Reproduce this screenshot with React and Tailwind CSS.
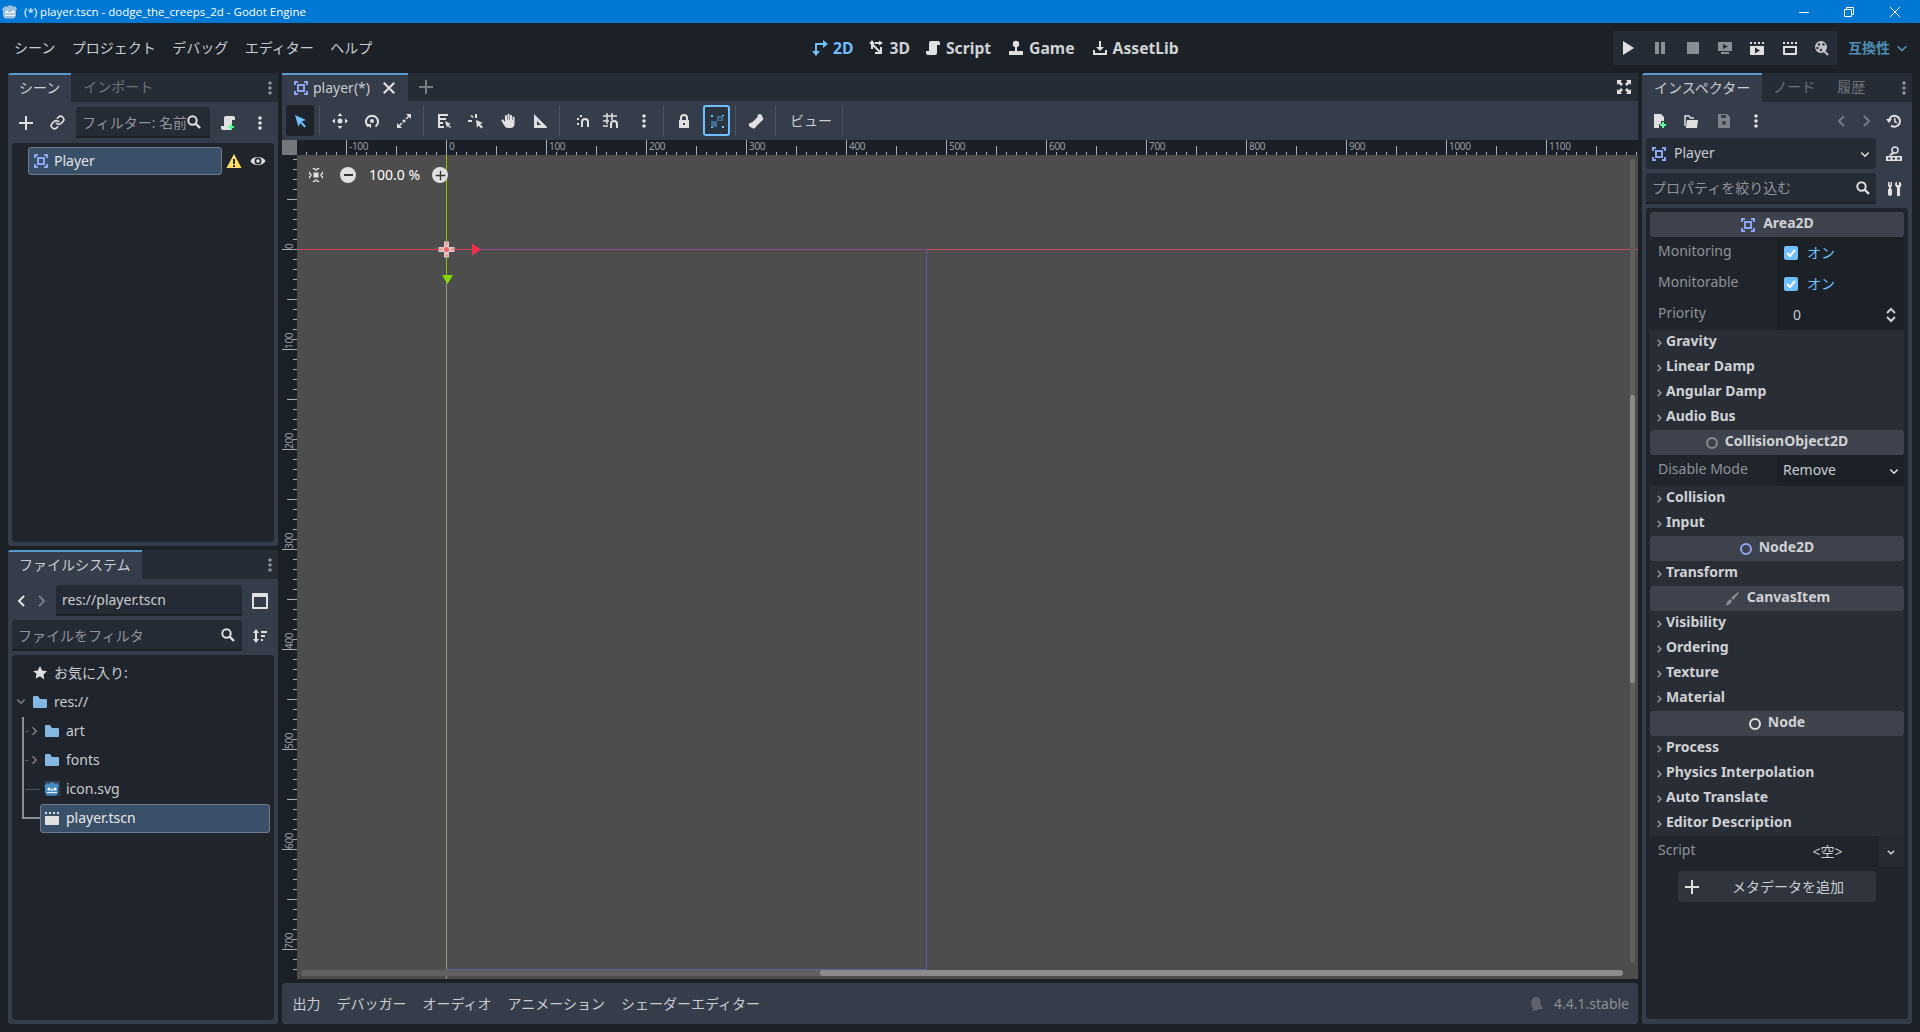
import React from "react";
import { Link as LinkIcon } from "lucide-react";

// 16x16 icon wrapper, same grid the editor icons use
const Ic = ({ s = 16, className = "", children }) => (
  <svg width={s} height={s} viewBox="0 0 16 16" className={`shrink-0 ${className}`} fill="#e0e0e0">
    {children}
  </svg>
);

const Area2D = ({ s = 16 }) => (
  <Ic s={s}>
    <path fill="#8da5f3" d="M1 1h4v2H3v2H1zM11 1h4v4h-2V3h-2zM1 11h2v2h2v2H1zM13 11h2v4h-4v-2h2z" />
    <path fill="#8da5f3" fillRule="evenodd" d="M4 4h8v8H4zM6 6v4h4V6z" />
  </Ic>
);
const Plus = ({ s = 16, fill = "#e0e0e0" }) => (
  <Ic s={s}><path fill={fill} d="M7 1h2v6h6v2H9v6H7V9H1V7h6z" /></Ic>
);
const Search = () => (
  <Ic>
    <circle cx="6.5" cy="6.5" r="4.2" fill="none" stroke="#e0e0e0" strokeWidth="2" />
    <path d="M9.5 9.5l4.5 4.5" stroke="#e0e0e0" strokeWidth="2.4" />
  </Ic>
);
const Kebab = ({ fill = "#e0e0e0" }) => (
  <Ic>
    <circle cx="8" cy="3" r="1.8" fill={fill} />
    <circle cx="8" cy="8" r="1.8" fill={fill} />
    <circle cx="8" cy="13" r="1.8" fill={fill} />
  </Ic>
);
const ScriptShape = () => (
  <path d="M6 1h7a2 2 0 0 1 2 2v2h-3v8a2 2 0 0 1-2 2H3a2 2 0 0 1-2-2v-2h3V3a2 2 0 0 1 2-2z" />
);
const Chevron = ({ dir = "right", s = 16, fill = "#e0e0e0", w = 2 }) => {
  const d = {
    right: "M6 3l5 5-5 5",
    left: "M10 3L5 8l5 5",
    down: "M3 6l5 5 5-5",
  }[dir];
  return (
    <Ic s={s}><path d={d} fill="none" stroke={fill} strokeWidth={w} /></Ic>
  );
};
const Folder = () => (
  <Ic><path fill="#84b7e2" d="M1 3a1 1 0 0 1 1-1h4l2 3h6a1 1 0 0 1 1 1v7a1 1 0 0 1-1 1H2a1 1 0 0 1-1-1z" /></Ic>
);
const GodotHead = ({ fill = "#478cbf" }) => (
  <Ic>
    <path fill={fill} d="M3 2l2 1 1-1.500h4l1 1.500 2-1 2 3-1 1.500v5.500l-2 2.500H3l-2-2.500V6.500L0 5z" />
    <circle cx="5" cy="8" r="1.600" fill="#fff" />
    <circle cx="11" cy="8" r="1.600" fill="#fff" />
    <path fill="#fff" d="M7.200 8h1.600v2H7.200zM3 11h10v1H3z" opacity=".85" />
  </Ic>
);
const Clapper = ({ children }) => (
  <Ic>
    <path d="M1 6h14v8a1 1 0 0 1-1 1H2a1 1 0 0 1-1-1z" />
    <path d="M1 2l2 0v2H1zM5 2h2v2H5zM9 2h2v2H9zM13 2h2v2h-2z" />
    {children}
  </Ic>
);

const Sep = ({ className = "" }) => <div className={`w-px h-[31px] bg-[#4b525f] shrink-0 ${className}`} />;
const ToolBtn = ({ className = "w-[32px]", children }) => (
  <div className={`h-[31px] flex items-center justify-center shrink-0 ${className}`}>{children}</div>
);

const rulerTicks = [];
for (let i = -14; i <= 120; i++) rulerTicks.push(i * 10);

// horizontal ruler, origin sits 149px from its left edge
const TopRuler = () => (
  <svg width="1341" height="15" className="block">
    {rulerTicks.map((v) => {
      const x = v + 149.5;
      const h = v % 100 === 0 ? 15 : v % 50 === 0 ? 9 : 3;
      return <line key={v} x1={x} x2={x} y1={15 - h} y2="15" stroke="#a9acb0" strokeWidth="1" />;
    })}
    {rulerTicks.filter((v) => v % 100 === 0 && v <= 1100).map((v) => (
      <text key={v} x={v + 152} y="10" fontSize="10" fill="#9a9da2" letterSpacing="-0.3">{v}</text>
    ))}
  </svg>
);

const vTicks = [];
for (let i = -9; i <= 73; i++) vTicks.push(i * 10);

const LeftRuler = () => (
  <svg width="15" height="824" className="block">
    {vTicks.map((v) => {
      const y = v + 94.5;
      const w = v % 100 === 0 ? 15 : v % 50 === 0 ? 10 : 4;
      return <line key={v} x1={15 - w} x2="15" y1={y} y2={y} stroke="#a9acb0" strokeWidth="1" />;
    })}
    {vTicks.filter((v) => v % 100 === 0).map((v) => (
      <text key={v} x="11" y={v + 94} fontSize="10" fill="#9a9da2" letterSpacing="-0.3" transform={`rotate(-90 11 ${v + 94})`}>{v}</text>
    ))}
  </svg>
);

const DockTab = ({ children, active, className = "px-[11px]" }) =>
  active ? (
    <div className={`h-[29px] pb-[2px] flex items-center bg-[#363d4a] border-t-2 border-[#5a9bcf] text-[#c9ccd0] shrink-0 ${className}`}>
      {children}
    </div>
  ) : (
    <div className="h-[29px] pb-[1px] flex items-center text-[#6e7279] shrink-0">{children}</div>
  );

const InputBox = ({ className = "", children }) => (
  <div className={`bg-[#252b34] border-b-2 border-[#1c2128] rounded-t-[3px] flex items-center overflow-hidden ${className}`}>
    {children}
  </div>
);

const SectionHeader = ({ icon, children }) => (
  <div className="h-[25px] bg-[#3d424c] rounded-[3px] flex items-center justify-center gap-[7px] font-bold text-[#cfd1d4]">
    {icon}
    <span className="-mt-[3px]">{children}</span>
  </div>
);
const Section = ({ children }) => (
  <div className="h-[25px] bg-[#282d36] flex items-center pl-[4px] font-bold text-[#cfd1d4]">
    <Chevron s={10} fill="#8d9096" w={2.5} />
    <span className="ml-[2px] -mt-[3px]">{children}</span>
  </div>
);
const PropRow = ({ label, children }) => (
  <div className="h-[31px] flex">
    <div className="flex-1 pl-[4px] pt-[4px] text-[#8f9297]">
      <span className="ml-[4px]">{label}</span>
    </div>
    <div className="w-[127px] bg-[#1c2128] flex items-center">{children}</div>
  </div>
);
const CheckVal = () => (
  <>
    <div className="ml-[7px] w-[14px] h-[14px] rounded-[2px] bg-[#70bfff] flex items-center justify-center">
      <svg width="10" height="10" viewBox="0 0 10 10"><path d="M1 5l3 3 5-6" fill="none" stroke="#fff" strokeWidth="2" /></svg>
    </div>
    <span className="ml-[9px] text-[#70bfff]">オン</span>
  </>
);
const Ring = ({ className }) => (
  <div className={`w-[12px] h-[12px] rounded-full border-2 ${className}`} />
);

const MainTab = ({ icon, label, className = "", color = "text-[#d0d2d5]" }) => (
  <div className={`flex items-center gap-[5px] font-bold text-[15.7px] ${color} ${className}`}>
    {icon}
    <span>{label}</span>
  </div>
);

const TreeRow = ({ className, icon, label }) => (
  <div className={`h-[29px] flex items-center relative ${className}`}>
    <span className="w-[16px] flex justify-center">{icon}</span>
    <span className="ml-[6px]">{label}</span>
  </div>
);

export default function App() {
  return (
    <div className="w-[1920px] h-[1032px] overflow-hidden flex flex-col bg-[#1c2128] text-[14px] leading-[20px] text-[#c9ccd0] font-['Noto_Sans','Noto_Sans_CJK_JP',sans-serif]">
      {/* window title */}
      <div className="h-[23px] bg-[#0078d4] flex items-center text-white text-[11.5px] shrink-0">
        <div className="w-[24px] pl-[2px]"><GodotHead fill="#9cc0e0" /></div>
        <span className="font-['Open_Sans',sans-serif]">(*) player.tscn - dodge_the_creeps_2d - Godot Engine</span>
        <div className="ml-auto flex items-center">
          <svg width="12" height="12" viewBox="0 0 12 12" className="mr-[33px]"><path d="M1 6.500h10" stroke="#fff" /></svg>
          <svg width="12" height="12" viewBox="0 0 12 12" className="mr-[34px]"><path d="M1.500 3.500h7v7h-7zM3.500 3.500v-2h7v7h-2" fill="none" stroke="#fff" /></svg>
          <svg width="12" height="12" viewBox="0 0 12 12" className="mr-[19px]"><path d="M1 1l10 10M11 1L1 11" stroke="#fff" /></svg>
        </div>
      </div>

      {/* main menu row */}
      <div className="h-[50px] shrink-0 flex items-center">
        <div className="w-[812px] pl-[14px] flex gap-[16.5px]">
          <span>シーン</span><span>プロジェクト</span><span>デバッグ</span><span>エディター</span><span>ヘルプ</span>
        </div>
        <div className="flex">
          <MainTab color="text-[#70bfff]" label="2D" icon={
            <Ic><path fill="none" stroke="#70bfff" strokeWidth="2" d="M4 13V4h8" /><path fill="#70bfff" d="M11 0l5 4-5 4zM0 11h8l-4 5z" /></Ic>
          } />
          <MainTab className="ml-[15px]" label="3D" icon={
            <Ic>
              <path d="M4 0L1 4h6zM15 3l-4-2.500v5z" />
              <path fill="none" stroke="#e0e0e0" strokeWidth="2" d="M4 4v5M4 4l9 9M13 14V7M14 13H7M7 3h4" />
            </Ic>
          } />
          <MainTab className="ml-[15px]" label="Script" icon={<Ic><ScriptShape /></Ic>} />
          <MainTab className="ml-[17px]" label="Game" icon={
            <Ic><circle cx="8" cy="4" r="3.200" /><path d="M7 6h2v5H7zM1 11h14v4H1z" /></Ic>
          } />
          <MainTab className="ml-[17px]" label="AssetLib" icon={
            <Ic><path d="M7 1h2v6h3l-4 4-4-4h3zM1 10h2v3h10v-3h2v5H1z" /></Ic>
          } />
        </div>
        <div className="ml-auto flex items-center pr-[11px]">
          <div className="w-[224px] h-[34px] bg-[#262c35] rounded-[3px] flex items-center justify-between px-[7px]">
            <Ic><path d="M3 1l11 7-11 7z" /></Ic>
            <Ic><path fill="#8a8e95" d="M3 2h4v12H3zM9 2h4v12H9z" /></Ic>
            <Ic><path fill="#8a8e95" d="M2 2h12v12H2z" /></Ic>
            <Ic><path fill="#8a8e95" fillRule="evenodd" d="M1 2h14v9H1zM6 4v5l5-2.500zM4 12h8v2H4z" /></Ic>
            <Clapper><path fill="#262c35" d="M6 7.500v6l5-3z" /></Clapper>
            <Clapper><path fill="#262c35" d="M3 8h10v5H3z" /></Clapper>
            <Ic>
              <circle cx="7" cy="7" r="6" fill="#c0c2c6" />
              <circle cx="5" cy="4.500" r="1.200" fill="#262c35" /><circle cx="9.500" cy="4.500" r="1.200" fill="#262c35" />
              <circle cx="3.500" cy="8" r="1.200" fill="#262c35" /><circle cx="7" cy="10" r="1.200" fill="#262c35" />
              <path d="M10 11l4 4" stroke="#c0c2c6" strokeWidth="2" />
            </Ic>
          </div>
          <span className="ml-[11px] text-[#4f8fb3] font-bold">互換性</span>
          <span className="ml-[5px]"><Chevron dir="down" fill="#4f8fb3" s={14} /></span>
        </div>
      </div>

      {/* docks */}
      <div className="flex gap-1 px-2 h-[951px] shrink-0">
        {/* left docks */}
        <div className="w-[270px] flex flex-col gap-1 shrink-0">
          <div className="h-[473px] flex flex-col bg-[#363d4a] rounded-[3px] overflow-hidden">
            <div className="h-[29px] bg-[#262c35] flex items-center shrink-0">
              <DockTab active>シーン</DockTab>
              <div className="ml-[12px]"><DockTab>インポート</DockTab></div>
              <div className="ml-auto"><Kebab fill="#8a8e95" /></div>
            </div>
            <div className="h-[41px] flex items-center shrink-0">
              <div className="w-[68px] flex items-center pl-[10px] gap-[16px]">
                <Plus />
                <LinkIcon size={15} color="#e0e0e0" strokeWidth={2.6} />
              </div>
              <InputBox className="w-[134px] h-[31px] pl-[6px] pr-[8px]">
                <span className="flex-1 whitespace-nowrap overflow-hidden text-[#8f939a] pt-[3px]">フィルター: 名前</span>
                <span className="-ml-[1px]"><Search /></span>
              </InputBox>
              <div className="ml-[10px]">
                <Ic>
                  <ScriptShape />
                  <path fill="#5fff97" d="M10 9h2v2h2v2h-2v2h-2v-2H8v-2h2z" />
                </Ic>
              </div>
              <div className="ml-[16px]"><Kebab /></div>
            </div>
            <div className="flex-1 mx-1 mb-1 bg-[#20252d] rounded-[3px] pt-[4px] pl-[16px]">
              <div className="flex items-center">
                <div className="w-[194px] h-[28px] bg-[#3a5068] border border-[#6f7b8a] rounded-[3px] flex items-center pl-[3px] text-[#e0e2e4]">
                  <span className="ml-[1px]"><Area2D /></span>
                  <span className="ml-[5px]">Player</span>
                </div>
                <div className="ml-[4px]">
                  <Ic>
                    <path fill="#ffdd65" d="M8 1l7.500 14H.5z" />
                    <path fill="#20252d" d="M7 6h2v5H7zM7 12h2v2H7z" />
                  </Ic>
                </div>
                <div className="ml-[8px]">
                  <Ic>
                    <path d="M.5 8C3 2.500 13 2.500 15.500 8 13 13.500 3 13.500 .5 8z" />
                    <circle cx="8" cy="8" r="3.500" fill="#20252d" />
                    <circle cx="8" cy="8" r="1.800" fill="#e0e0e0" />
                  </Ic>
                </div>
              </div>
            </div>
          </div>

          <div className="h-[474px] flex flex-col bg-[#363d4a] rounded-[3px] overflow-hidden">
            <div className="h-[29px] bg-[#262c35] flex items-center shrink-0">
              <DockTab active>ファイルシステム</DockTab>
              <div className="ml-auto"><Kebab fill="#8a8e95" /></div>
            </div>
            <div className="h-[37px] flex items-center shrink-0 pt-[6px]">
              <div className="pl-[6px] w-[48px] flex gap-[3px]">
                <Chevron dir="left" />
                <Chevron fill="#757a82" />
              </div>
              <InputBox className="w-[186px] h-[31px] pl-[6px]">res://player.tscn</InputBox>
              <div className="ml-[10px]">
                <Ic><path fillRule="evenodd" d="M0 1a1 1 0 0 1 1-1h14a1 1 0 0 1 1 1v14a1 1 0 0 1-1 1H1a1 1 0 0 1-1-1zM2 4v10h12V4z" /></Ic>
              </div>
            </div>
            <div className="h-[35px] flex items-center shrink-0 pt-[4px] pl-[4px]">
              <InputBox className="w-[230px] h-[31px] pl-[6px] pr-[6px]">
                <span className="flex-1 text-[#8f939a] pt-[3px]">ファイルをフィルタ</span>
                <Search />
              </InputBox>
              <div className="ml-[10px]">
                <Ic><path d="M4 1l3 4H5v6h2l-3 4-3-4h2V5H1zM9 3h6v2H9zM9 7h4v2H9zM9 11h2v2H9z" /></Ic>
              </div>
            </div>
            <div className="flex-1 mx-1 mb-1 mt-1 bg-[#20252d] rounded-[3px] pt-[3px] relative">
              <TreeRow className="pl-[20px]" icon={<Ic><path d="M8 1l2.200 4.500 4.800.7-3.500 3.400.8 4.900L8 11.200l-4.300 2.300.8-4.900L1 6.200l4.800-.7z" /></Ic>} label="お気に入り:" />
              <div className="absolute left-[3px] top-[40px]"><Chevron dir="down" s={12} fill="#7d8187" /></div>
              <TreeRow className="pl-[20px]" icon={<Folder />} label="res://" />
              <div className="absolute left-[10px] top-[62px] w-[2px] h-[101px] bg-[#8b8d90]" />
              <div className="absolute left-[10px] top-[162px] w-[18px] h-[2px] bg-[#8b8d90]" />
              <div className="absolute left-[13px] top-[134px] w-[15px] h-px bg-[#4c5058]" />
              <div className="absolute left-[13px] top-[76px] w-[4px] h-px bg-[#4c5058]" />
              <div className="absolute left-[13px] top-[105px] w-[4px] h-px bg-[#4c5058]" />
              <div className="absolute left-[16px] top-[70px]"><Chevron s={12} fill="#7d8187" /></div>
              <div className="absolute left-[16px] top-[99px]"><Chevron s={12} fill="#7d8187" /></div>
              <TreeRow className="pl-[32px]" icon={<Folder />} label="art" />
              <TreeRow className="pl-[32px]" icon={<Folder />} label="fonts" />
              <TreeRow className="pl-[32px]" icon={
                <div className="w-[15px] h-[15px] bg-[#363d55] flex items-center justify-center rounded-[1px]">
                  <GodotHead />
                </div>
              } label="icon.svg" />
              <div className="absolute left-[28px] top-[149px] w-[230px] h-[29px] bg-[#3a5068] border border-[#6f7b8a] rounded-[3px]" />
              <div className="relative text-[#e6e8ea]">
                <TreeRow className="pl-[32px]" icon={<Clapper />} label="player.tscn" />
              </div>
            </div>
          </div>
        </div>

        {/* center */}
        <div className="w-[1356px] flex flex-col shrink-0">
          <div className="h-[28px] bg-[#262c35] flex items-center shrink-0 rounded-t-[3px]">
            <div className="w-[126px] h-[28px] bg-[#363d4a] border-t-2 border-[#5a9bcf] flex items-center pl-[11px] shrink-0">
              <Area2D />
              <span className="ml-[4px] text-[#c9ccd0]">player(*)</span>
              <span className="ml-[11px]">
                <Ic><path d="M3.500 2L8 6.500 12.500 2 14 3.500 9.500 8l4.500 4.500-1.500 1.500L8 9.500 3.500 14 2 12.500 6.500 8 2 3.500z" /></Ic>
              </span>
            </div>
            <div className="ml-[10px]"><Plus fill="#777b82" /></div>
            <div className="ml-auto mr-[6px]">
              <Ic><path d="M1 1h5L4.500 2.500 7 5 5 7 2.500 4.500 1 6zM15 1v5l-1.500-1.500L11 7 9 5l2.500-2.500L10 1zM1 15v-5l1.500 1.500L5 9l2 2-2.500 2.500L6 15zM15 15h-5l1.500-1.500L9 11l2-2 2.500 2.500L15 10z" /></Ic>
            </div>
          </div>

          <div className="h-[39px] bg-[#363d4a] flex items-center pl-[4px] shrink-0">
            <div className="w-[28px] h-[31px] bg-[#1f242c] rounded-[3px] flex items-center justify-center">
              <Ic><path fill="#70bfff" d="M3 2l11 5-4.500 1.500L14 13l-1.500 1.500-4.500-4.500L6.500 14z" /></Ic>
            </div>
            <Sep className="ml-[5px] mr-[4px]" />
            <ToolBtn>
              <Ic><circle cx="8" cy="8" r="2.500" /><path d="M8 0l2.500 3h-5zM8 16l-2.500-3h5zM0 8l3-2.500v5zM16 8l-3 2.500v-5z" /></Ic>
            </ToolBtn>
            <ToolBtn>
              <Ic><path fill="none" stroke="#e0e0e0" strokeWidth="2" d="M4.500 13.500a6 6 0 1 1 7 0" /><circle cx="8" cy="8" r="2" /><path d="M2 11h5v4z" /></Ic>
            </ToolBtn>
            <ToolBtn>
              <Ic><path d="M10 1h5v5l-2-2-2.500 2.500-1-1L12 3zM6 15H1v-5l2 2 2.500-2.500 1 1L4 13z" /><circle cx="8" cy="8" r="1.500" /></Ic>
            </ToolBtn>
            <Sep className="ml-[3px] mr-[4px]" />
            <ToolBtn>
              <Ic><path d="M2 1h10v2H4v2h6v2H4v2h3v2H4v2h4v2H2z" /><path d="M9 8l6 3-2.500.8L15 14l-1 1-2.400-2.200L11 15z" /></Ic>
            </ToolBtn>
            <ToolBtn>
              <Ic><path d="M0 7h4v2H0zM7 1h2v4H7zM2.500 3l1.200-1 2 2-1.200 1z" /><path d="M8 7l7 3-3 1 3 3-1.500 1.500-3-3L9 15z" /></Ic>
            </ToolBtn>
            <ToolBtn>
              <Ic><path d="M5 3a1 1 0 0 1 2 0v4h.5V1.800a1 1 0 0 1 2 0V7h.5V2.800a1 1 0 0 1 2 0V7l.5 0V4.500a1 1 0 0 1 2 0V11c0 2.500-2 4-4 4H8c-2 0-3-1-4-3L1.500 8c-.5-1 1-2 2-1L5 9z" /></Ic>
            </ToolBtn>
            <ToolBtn>
              <Ic><path fillRule="evenodd" d="M2 1l13 13v1H2zM5 8v4h4z" /></Ic>
            </ToolBtn>
            <Sep className="ml-[3px] mr-[6px]" />
            <ToolBtn>
              <Ic><path d="M3 5h2v2H3zM3 10h2v2H3zM6 2h2v2H6z" /><path fill="none" stroke="#e0e0e0" strokeWidth="2" d="M8 14V9a3 3 0 0 1 6 0v5" /></Ic>
            </ToolBtn>
            <ToolBtn className="w-[26px]">
              <Ic>
                <path fill="none" stroke="#e0e0e0" strokeWidth="1.500" d="M4 0v11M9 0v7M0 3h14M0 8h6M0 13h5" />
                <path fill="none" stroke="#e0e0e0" strokeWidth="2" d="M8 15v-4a3 3 0 0 1 6 0v4" />
              </Ic>
            </ToolBtn>
            <ToolBtn className="w-[32px] ml-[4px]"><Kebab /></ToolBtn>
            <Sep className="ml-[3px] mr-[4px]" />
            <ToolBtn>
              <Ic><path fill="none" stroke="#e0e0e0" strokeWidth="2" d="M5 8V5a3 3 0 0 1 6 0v3" /><path fillRule="evenodd" d="M3 7h10v8H3zM7 10v2h2v-2z" /></Ic>
            </ToolBtn>
            <div className="w-[27px] h-[31px] ml-[3px] border-2 border-[#70bfff] rounded-[3px] bg-[#2a3340] flex items-center justify-center">
              <Ic>
                <path fill="#426c93" d="M2 8h6v6H2zM8 3h6v5H8z" />
                <path fill="#2a3340" d="M10 5h2v2h-2z" />
                <path fill="#6fd0ff" d="M2 2h2v2H2zM13 13h2v2h-2zM2 14h2v1H2zM13 2h2v1h-2z" />
              </Ic>
            </div>
            <Sep className="ml-[5px] mr-[5px]" />
            <ToolBtn className="w-[30px]">
              <Ic><path d="M10.500 1.500a2.500 2.500 0 0 1 3.800 2.200 2.500 2.500 0 0 1-.7 4.300L8 13.500a2.500 2.500 0 0 1-4.500 1 2.500 2.500 0 0 1-2-4.200 2.500 2.500 0 0 1 2.500-.8L9.500 4a2.500 2.500 0 0 1 1-2.500z" /></Ic>
            </ToolBtn>
            <Sep className="ml-[4px] mr-[14px]" />
            <span className="text-[#c9ccd0]">ビュー</span>
            <Sep className="ml-[10px]" />
          </div>

          <div className="h-[15px] flex bg-[#1b2028] shrink-0">
            <div className="w-[15px] bg-[#74777c] shrink-0" />
            <TopRuler />
          </div>

          <div className="h-[824px] flex shrink-0">
            <div className="w-[15px] bg-[#1b2028] shrink-0"><LeftRuler /></div>
            {/* 2D canvas: axes, origin and overlays sit at their canvas coordinates */}
            <div className="flex-1 bg-[#4d4d4d] relative overflow-hidden">
              <div className="absolute left-[149px] top-0 w-px h-[94px] bg-[#8cc000]" />
              <div className="absolute left-[149px] top-[94px] w-px h-[730px] bg-[#8a9e78]" />
              <div className="absolute left-[149px] top-[94px] w-px h-[34px] bg-[#8cc000]" />
              <div className="absolute left-0 top-[94px] w-[149px] h-px bg-[#d9405a]" />
              <div className="absolute left-[149px] top-[94px] w-[480px] h-px bg-[#93478f]" />
              <div className="absolute left-[149px] top-[94px] w-[30px] h-px bg-[#d9405a]" />
              <div className="absolute left-[629px] top-[94px] w-[713px] h-px bg-[#c94a6a]" />
              <div className="absolute left-[629px] top-[94px] w-px h-[720px] bg-[#5f5fa8]" />
              <div className="absolute left-[149px] top-[814px] w-[480px] h-px bg-[#5f5fa8]" />

              {/* h scrollbar */}
              <div className="absolute left-[4px] top-[815px] w-[1322px] h-[6px] rounded-full bg-[#606060]">
                <div className="absolute left-[519px] top-0 right-0 h-full rounded-full bg-[#8c8c8c]" />
              </div>
              {/* v scrollbar */}
              <div className="absolute left-[1333px] top-[4px] w-[5px] h-[804px] rounded-full bg-[#606060]">
                <div className="absolute left-0 top-[236px] w-full h-[288px] rounded-full bg-[#8c8c8c]" />
              </div>

              <svg className="absolute left-[137px] top-[83px]" width="48" height="48" viewBox="0 0 48 48">
                <path d="M10 3.500h5v5.500h5.500v5H15v5.500h-5V14H4.500V9H10z" fill="#e4c8c4" />
                <circle cx="12.500" cy="11.500" r="2.500" fill="#f0606c" />
                <path d="M12.500 4.500v2.500M12.500 16v2.500M5.500 11.500h2.500M17 11.500h3" stroke="#f08080" strokeWidth="1.500" />
                <path d="M38 5.500l9 6-9 6z" fill="#f5304f" />
              </svg>
              <svg className="absolute left-[145px] top-[120px]" width="11" height="9" viewBox="0 0 11 9"><path d="M0 0h11L5.500 9z" fill="#86d800" /></svg>

              <div className="absolute left-[11px] top-[10px] flex items-center h-[20px]">
                <Ic>
                  <rect x="5.500" y="5.500" width="5" height="5" />
                  <path d="M4 1h3l1 2 1-2h3L8 4zM4 15h3l1-2 1 2h3l-4-3zM1 4v3l2 1-2 1v3l3-4zM15 4v3l-2 1 2 1v3l-3-4z" />
                </Ic>
                <div className="ml-[16px] w-[16px] h-[16px] rounded-full bg-[#e0e0e0] flex items-center justify-center">
                  <div className="w-[9px] h-[2px] bg-[#363636]" />
                </div>
                <span className="ml-[13px] text-white">100.0 %</span>
                <div className="ml-[12px] w-[16px] h-[16px] rounded-full bg-[#e0e0e0] flex items-center justify-center">
                  <Plus s={11} fill="#363636" />
                </div>
              </div>
            </div>
          </div>

          <div className="h-[41px] mt-1 bg-[#363d4a] rounded-[3px] flex items-center pl-[10.5px] pr-[9px] shrink-0">
            <div className="flex gap-4">
              <span>出力</span><span>デバッガー</span><span>オーディオ</span><span>アニメーション</span><span>シェーダーエディター</span>
            </div>
            <div className="ml-auto flex items-center text-[#8a8e95]">
              <Ic><path fill="#5e636c" d="M8 1a4.500 4.500 0 0 1 4.500 4.500l1 5 2 2L4 15l1-2-1-3.500A5.500 5.500 0 0 1 8 1z" /></Ic>
              <span className="ml-[10px]">4.4.1.stable</span>
            </div>
          </div>
        </div>

        {/* inspector */}
        <div className="w-[270px] flex flex-col bg-[#363d4a] rounded-[3px] overflow-hidden shrink-0">
          <div className="h-[29px] bg-[#262c35] flex items-center shrink-0">
            <DockTab active className="px-[12px]">インスペクター</DockTab>
            <div className="ml-[11px]"><DockTab>ノード</DockTab></div>
            <div className="ml-[22px]"><DockTab>履歴</DockTab></div>
            <div className="ml-auto"><Kebab fill="#8a8e95" /></div>
          </div>
          <div className="h-[36px] flex items-center shrink-0 pl-[9px] pt-[2px]">
            <Ic>
              <path d="M3 1h7l3 3v4h-3v3H8v4H3z" />
              <path fill="#5fff97" d="M11 9h2v2h2v2h-2v2h-2v-2H9v-2h2z" />
            </Ic>
            <span className="ml-[16px]">
              <Ic><path fill="none" stroke="#e0e0e0" strokeWidth="1.500" d="M2 13V3h4l1.500 2H11" /><path d="M3 14l1-7h11l-1 8H3z" /></Ic>
            </span>
            <span className="ml-[17px]">
              <Ic><path fill="#7d828b" fillRule="evenodd" d="M2 1h9l3 3v11H2zM5 2v3h5V2zM8 8a2 2 0 1 0 0 4 2 2 0 0 0 0-4z" /></Ic>
            </span>
            <span className="ml-[16px]"><Kebab /></span>
            <span className="ml-[70px]"><Chevron dir="left" fill="#757a82" /></span>
            <span className="ml-[8px]"><Chevron fill="#757a82" /></span>
            <span className="ml-[12px]">
              <Ic>
                <path fill="none" stroke="#e0e0e0" strokeWidth="2" d="M3 8a5.500 5.500 0 1 1 2 4.500" />
                <path d="M0 6h6l-3 4zM8 5h1.500v3l2 1.500-.8 1L8 9z" />
              </Ic>
            </span>
          </div>
          <div className="h-[31px] flex items-center shrink-0 pl-[4px]">
            <div className="w-[230px] h-[31px] bg-[#252b34] rounded-[3px] flex items-center pl-[5px] pr-[5px]">
              <Area2D />
              <span className="ml-[7px] flex-1 -mt-[2px]">Player</span>
              <Chevron dir="down" s={12} />
            </div>
            <div className="ml-[10px]">
              <Ic>
                <circle cx="9" cy="4" r="3" fill="none" stroke="#e0e0e0" strokeWidth="1.500" />
                <path d="M6.500 6L3 9l1 1 4-2z" />
                <path d="M0 10h16v5H0z" />
                <path fill="#363d4a" d="M2 11.500h2.500v2H2zM6.500 11.500h2.500v2H6.500zM11 11.500h3v2h-3z" />
              </Ic>
            </div>
          </div>
          <div className="h-[35px] flex items-center shrink-0 pl-[4px] pt-[4px]">
            <InputBox className="w-[230px] h-[31px] pl-[6px] pr-[5px]">
              <span className="flex-1 text-[#8f939a]">プロパティを絞り込む</span>
              <Search />
            </InputBox>
            <div className="ml-[10px]">
              <Ic><path d="M2 1h1.500v3h1V1H6v4L5 6v2h1v5a2 2 0 0 1-4 0V8h1V6L2 5zM10 1h1v3h2V1h1a3.500 3.500 0 0 1 0 5.500V15h-3V6.500A3.500 3.500 0 0 1 10 1z" /></Ic>
            </div>
          </div>

          <div className="flex-1 mx-1 mt-1 mb-[5px] bg-[#20252d] rounded-[3px] px-1 pt-1">
            <SectionHeader icon={<Area2D />}>Area2D</SectionHeader>
            <PropRow label="Monitoring"><CheckVal /></PropRow>
            <PropRow label="Monitorable"><CheckVal /></PropRow>
            <PropRow label="Priority">
              <span className="ml-[16px] flex-1 text-[#c9ccd0]">0</span>
              <div className="mr-[5px]">
                <Ic><path fill="none" stroke="#c9ccd0" strokeWidth="2" d="M4 6l4-4 4 4M4 10l4 4 4-4" /></Ic>
              </div>
            </PropRow>
            <Section>Gravity</Section>
            <Section>Linear Damp</Section>
            <Section>Angular Damp</Section>
            <Section>Audio Bus</Section>
            <SectionHeader icon={<Ring className="border-[#8a8c8f]" />}>CollisionObject2D</SectionHeader>
            <PropRow label="Disable Mode">
              <span className="ml-[6px] flex-1 -mt-[1px]">Remove</span>
              <div className="mr-[4px]"><Chevron dir="down" s={12} /></div>
            </PropRow>
            <Section>Collision</Section>
            <Section>Input</Section>
            <SectionHeader icon={<Ring className="border-[#8da5f3]" />}>Node2D</SectionHeader>
            <Section>Transform</Section>
            <SectionHeader icon={
              <Ic><path fill="#8a8c8f" d="M14 1l1 1-6 7-2-2zM6 8l2 2-2 3-4 2 1-4z" /></Ic>
            }>CanvasItem</SectionHeader>
            <Section>Visibility</Section>
            <Section>Ordering</Section>
            <Section>Texture</Section>
            <Section>Material</Section>
            <SectionHeader icon={<Ring className="border-[#e0e0e0]" />}>Node</SectionHeader>
            <Section>Process</Section>
            <Section>Physics Interpolation</Section>
            <Section>Auto Translate</Section>
            <Section>Editor Description</Section>
            <div className="h-[31px] flex">
              <div className="w-[127px] pl-[8px] pt-[4px] text-[#8f9297]">Script</div>
              <div className="w-[101px] flex items-center justify-center text-[#c9ccd0]">&lt;空&gt;</div>
              <div className="w-[26px] bg-[#252a33] rounded-[3px] flex items-center justify-center">
                <Chevron dir="down" s={10} w={2.5} fill="#c9ccd0" />
              </div>
            </div>
            <div className="mt-1 ml-[28px] w-[198px] h-[31px] bg-[#2f343d] rounded-[3px] flex items-center pl-[6px]">
              <Plus />
              <span className="ml-[32px]">メタデータを追加</span>
            </div>
          </div>
        </div>
      </div>
    </div>
  );
}
